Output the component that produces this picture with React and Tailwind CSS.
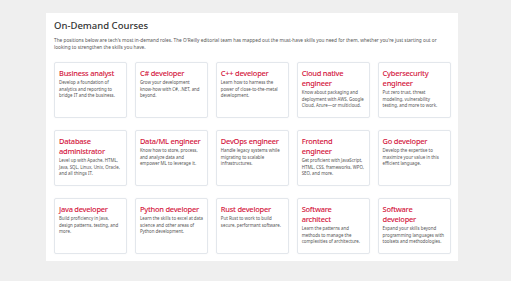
import React from 'react';

// titles that break onto two lines in the original layout carry a '|'
const courses = [
    { title: 'Business analyst', body: 'Develop a foundation of analytics and reporting to bridge IT and the business.' },
    { title: 'C# developer', body: 'Grow your development know-how with C#, .NET, and beyond.' },
    { title: 'C++ developer', body: 'Learn how to harness the power of close-to-the-metal development.' },
    { title: 'Cloud native|engineer', body: 'Know about packaging and deployment with AWS, Google Cloud, Azure—or multicloud.' },
    { title: 'Cybersecurity|engineer', body: 'Put zero trust, threat modeling, vulnerability testing, and more to work.' },
    { title: 'Database|administrator', body: 'Level up with Apache, HTML, Java, SQL, Linux, Unix, Oracle, and all things IT.' },
    { title: 'Data/ML engineer', body: 'Know how to store, process, and analyze data and empower ML to leverage it.' },
    { title: 'DevOps engineer', body: 'Handle legacy systems while migrating to scalable infrastructures.' },
    { title: 'Frontend|engineer', body: 'Get proficient with JavaScript, HTML, CSS, frameworks, WPO, SEO, and more.' },
    { title: 'Go developer', body: 'Develop the expertise to maximize your value in this efficient language.' },
    { title: 'Java developer', body: 'Build proficiency in Java, design patterns, testing, and more.' },
    { title: 'Python developer', body: 'Learn the skills to excel at data science and other areas of Python development.' },
    { title: 'Rust developer', body: 'Put Rust to work to build secure, performant software.' },
    { title: 'Software|architect', body: 'Learn the patterns and methods to manage the complexities of architecture.' },
    { title: 'Software|developer', body: 'Expand your skills beyond programming languages with toolsets and methodologies.' },
];

const CourseCard = ({ title, body }) => (
    <a href="#" className="block h-[56px] bg-white border border-[#e3e7ec] rounded-[2px] px-[4px] pt-[5px] shadow-[0_0_2px_rgba(0,0,0,0.04)]">
        <h4 className="text-[7.5px] leading-[10px] font-medium text-[#d3143c] tracking-[-0.035em]">
            {title.split('|').map((line, i) => (
                <span key={i} className="block">{line}</span>
            ))}
        </h4>
        <p className="mt-[1px] text-[4.4px] leading-[6.5px] text-[#555]">{body}</p>
    </a>
);

const App = () => {
    return (
        <div className="min-h-[281px] bg-[#efefef] pt-[13px] font-['Noto_Sans',sans-serif]">
            <div className="ml-[46px] w-[412px] h-[248px] bg-white pl-[8px] pr-[7px] pt-[6px]">
                <h2 className="text-[9.5px] leading-[14px] font-medium text-[#333]">On-Demand Courses</h2>
                <p className="mt-[4px] text-[4.75px] leading-[7px] text-[#555] pr-[4px]">
                    The positions below are tech's most in-demand roles. The O'Reilly editorial team has mapped out the must-have skills you need for them, whether you're just starting out or looking to strengthen the skills you have.
                </p>
                <div className="mt-[11px] grid grid-cols-5 gap-x-[7.5px] gap-y-[12px]">
                    {courses.map(course => (
                        <CourseCard key={course.title} title={course.title} body={course.body} />
                    ))}
                </div>
            </div>
        </div>
    );
};

export default App;
